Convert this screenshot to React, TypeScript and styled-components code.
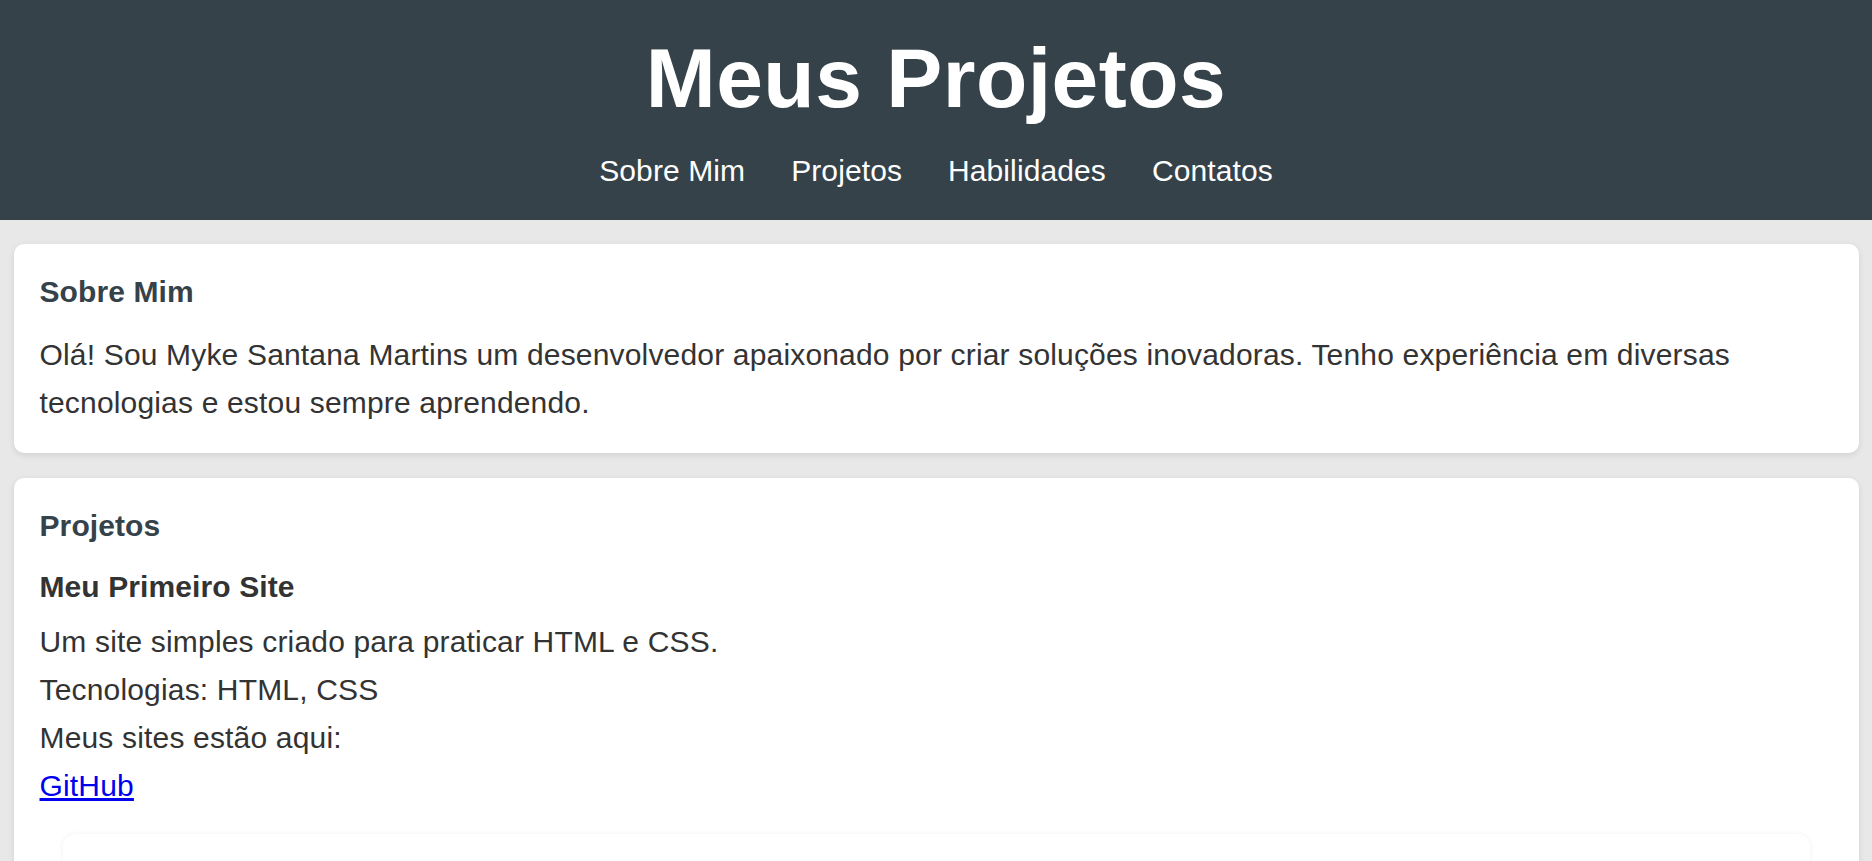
import React from "react";
import styled, { createGlobalStyle } from "styled-components";

const GlobalStyle = createGlobalStyle`
  html, body {
    margin: 0;
    padding: 0;
  }
  body {
    background: #e8e8e8;
    font-family: "Liberation Sans", Arial, sans-serif;
    color: #333333;
    overflow: hidden;
  }
  * {
    box-sizing: border-box;
  }
`;

const Header = styled.header`
  background: #35424a;
  color: #ffffff;
  text-align: center;
  padding: 30px 0 32px;
`;

const Title = styled.h1`
  margin: 0 0 28px;
  font-size: 84px;
  line-height: 96px;
  font-weight: 700;
  letter-spacing: 0.5px;
`;

const Nav = styled.nav`
  display: flex;
  justify-content: center;
  gap: 46px;
`;

const NavLink = styled.a`
  color: #ffffff;
  text-decoration: none;
  font-size: 30px;
  line-height: 34px;
  letter-spacing: 0.1px;
`;

const Main = styled.main`
  display: flex;
  flex-direction: column;
  gap: 25px;
  padding: 24px 13px 0 14px;
`;

const Card = styled.section`
  background: #ffffff;
  border-radius: 10px;
  padding: 26px 26px 26px 25.5px;
  box-shadow: 0 2px 6px rgba(0, 0, 0, 0.1);
`;

const SectionTitle = styled.h2`
  margin: 0 0 17px;
  font-size: 30px;
  line-height: 44px;
  font-weight: 700;
  color: #35424a;
  letter-spacing: 0.1px;
`;

const ProjectTitle = styled.h3`
  margin: 0 0 9px;
  font-size: 30px;
  line-height: 44px;
  font-weight: 700;
  color: #333333;
  letter-spacing: 0.1px;
`;

const Text = styled.p`
  margin: 0;
  font-size: 30px;
  line-height: 48px;
  letter-spacing: 0.17px;
`;

const Link = styled.a`
  font-size: 30px;
  line-height: 48px;
  color: #0000ee;
  text-decoration: underline;
  letter-spacing: 0.17px;
`;

const InnerCard = styled.div`
  margin: 24px 23px 0;
  min-height: 200px;
  background: #ffffff;
  border-radius: 12px;
  box-shadow: 0 0 5px rgba(0, 0, 0, 0.06);
`;

export default function App() {
  return (
    <>
      <GlobalStyle />
      <Header>
        <Title>Meus Projetos</Title>
        <Nav>
          <NavLink href="#sobre">Sobre Mim</NavLink>
          <NavLink href="#projetos">Projetos</NavLink>
          <NavLink href="#habilidades">Habilidades</NavLink>
          <NavLink href="#contatos">Contatos</NavLink>
        </Nav>
      </Header>
      <Main>
        <Card id="sobre">
          <SectionTitle>Sobre Mim</SectionTitle>
          <Text>
            Olá! Sou Myke Santana Martins um desenvolvedor apaixonado por criar
            soluções inovadoras. Tenho experiência em diversas tecnologias e
            estou sempre aprendendo.
          </Text>
        </Card>
        <Card id="projetos">
          <SectionTitle>Projetos</SectionTitle>
          <ProjectTitle>Meu Primeiro Site</ProjectTitle>
          <Text>Um site simples criado para praticar HTML e CSS.</Text>
          <Text>Tecnologias: HTML, CSS</Text>
          <Text>Meus sites estão aqui:</Text>
          <Link href="#github">GitHub</Link>
          <InnerCard />
        </Card>
      </Main>
    </>
  );
}
